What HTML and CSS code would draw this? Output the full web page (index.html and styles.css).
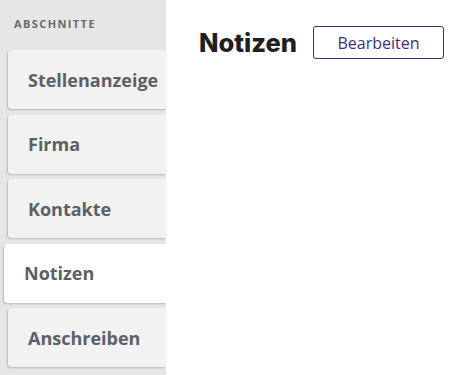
FILE: index.html
```html
<!DOCTYPE html>
<html lang="de">
<head>
    <meta charset="UTF-8">
    <meta name="viewport" content="width=device-width, initial-scale=1.0">
    <title>Notizen</title>
    <link rel="stylesheet" href="styles.css">
</head>
<body>
    <div class="layout">
        <aside class="sidebar">
            <div class="sidebar-title">Abschnitte</div>
            <nav class="sections">
                <a class="section" href="#">Stellenanzeige</a>
                <a class="section" href="#">Firma</a>
                <a class="section" href="#">Kontakte</a>
                <a class="section active" href="#">Notizen</a>
                <a class="section" href="#">Anschreiben</a>
            </nav>
        </aside>
        <main class="content">
            <div class="content-header">
                <h1>Notizen</h1>
                <button class="edit-btn">Bearbeiten</button>
            </div>
        </main>
    </div>
</body>
</html>
```

FILE: styles.css
```css
body {
    margin: 0;
    padding: 0;
    font-family: "Open Sans", Arial, sans-serif;
    background: #fff;
}
.layout {
    display: flex;
    height: 375px;
}
.sidebar {
    width: 166px;
    flex-shrink: 0;
    background-color: #e6e6e6;
    padding-top: 16px;
    overflow: hidden;
}
.sidebar-title {
    padding-left: 14px;
    font-size: 11px;
    font-weight: 700;
    letter-spacing: 1.4px;
    text-transform: uppercase;
    color: #6b6b6b;
    line-height: 16px;
}
.sections {
    display: flex;
    flex-direction: column;
    gap: 5.5px;
    margin-top: 18px;
}
.section {
    display: flex;
    align-items: center;
    height: 59px;
    margin-left: 8px;
    padding-left: 20px;
    background-color: #f2f2f2;
    border-radius: 4px 0 0 4px;
    box-shadow: -1px 1px 2px rgba(0, 0, 0, 0.2);
    font-size: 18px;
    font-weight: 700;
    color: #5d6066;
    text-decoration: none;
}
.section.active {
    margin-left: 4px;
    background-color: #fff;
}
.content {
    flex: 1;
    padding: 26px 9px 0 33px;
}
.content-header {
    display: flex;
    align-items: center;
    gap: 16px;
}
.content-header h1 {
    margin: 0;
    font-family: "Inter", sans-serif;
    font-size: 25.5px;
    font-weight: 800;
    color: #1f1f1f;
}
.edit-btn {
    width: 131px;
    height: 33px;
    background: #fff;
    border: 1px solid #3b2f7f;
    border-radius: 3px;
    color: #3b2f7f;
    font-family: "Open Sans", sans-serif;
    font-size: 16px;
    cursor: pointer;
}
```
